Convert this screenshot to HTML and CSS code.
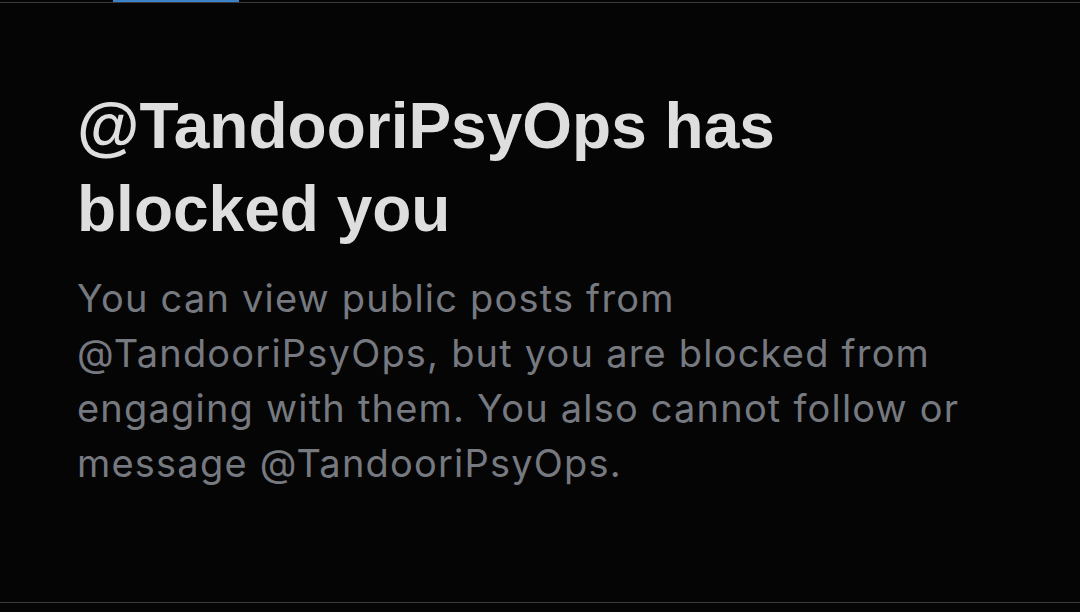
FILE: index.html
```html
<!DOCTYPE html>
<html lang="en">
<head>
    <meta charset="UTF-8">
    <title>Blocked</title>
    <link rel="stylesheet" href="styles.css">
</head>
<body>
    <div class="tabs">
        <div class="tab-indicator"></div>
    </div>
    <div class="notice">
        <h1 class="title">@TandooriPsyOps has blocked you</h1>
        <p class="text">You can view public posts from @TandooriPsyOps, but you are blocked from engaging with them. You also cannot follow or message @TandooriPsyOps.</p>
    </div>
    <div class="bottom-line"></div>
</body>
</html>
```
FILE: styles.css
```css
body {
    margin: 0;
    background-color: #050505;
    height: 612px;
    overflow: hidden;
    display: flex;
    flex-direction: column;
}

.tabs {
    height: 2px;
    border-bottom: 1px solid #3a3a3a;
    display: flex;
}

.tab-indicator {
    margin-left: 113px;
    width: 126px;
    height: 2px;
    background-color: #3b82c8;
}

.notice {
    flex: 1;
    padding: 82px 0 0 77px;
    width: 910px;
}

.title {
    font-family: 'Liberation Sans', sans-serif;
    font-weight: 700;
    font-size: 64px;
    line-height: 83px;
    color: #dedede;
    margin: 0;
    width: 740px;
}

.text {
    font-family: 'Inter', sans-serif;
    font-size: 38px;
    letter-spacing: 1.2px;
    line-height: 55px;
    color: #767a80;
    margin: 20px 0 0;
}

.bottom-line {
    height: 1px;
    background-color: #3a3a3a;
    margin-bottom: 9px;
}
```
